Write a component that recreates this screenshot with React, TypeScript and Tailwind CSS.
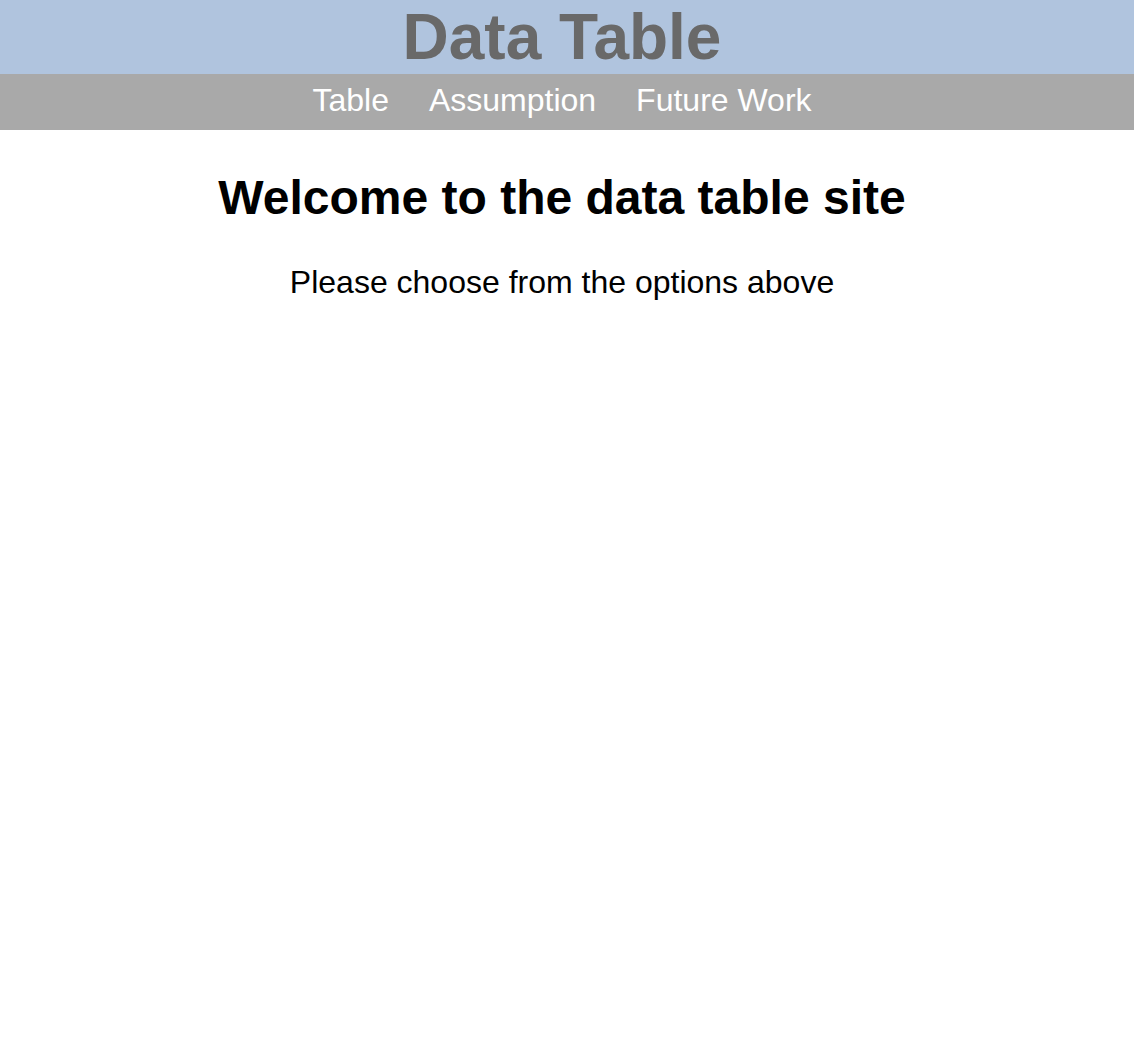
export default function App() {
    const links = ["Table", "Assumption", "Future Work"];

    return (
        <div className="min-h-[1044px] bg-white font-['Liberation_Sans',Arial,sans-serif]">
            <header className="bg-[#b0c4de] pr-[10px]">
                <h1 className="h-[74px] text-center text-[64px] leading-[74px] font-bold text-[#696969]">Data Table</h1>
            </header>
            <nav className="h-[56px] bg-[#a9a9a9] pt-[8px] pr-[10px]">
                <ul className="flex justify-center gap-[40px]">
                    {links.map((link) => (
                        <li key={link}>
                            <a href="#" className="text-[32px] leading-[37px] text-white">{link}</a>
                        </li>
                    ))}
                </ul>
            </nav>
            <main className="pr-[10px] text-center text-black">
                <h1 className="mt-[40px] text-[48px] leading-[55px] font-bold">Welcome to the data table site</h1>
                <p className="mt-[39px] text-[32px] leading-[37px]">Please choose from the options above</p>
            </main>
        </div>
    );
}
